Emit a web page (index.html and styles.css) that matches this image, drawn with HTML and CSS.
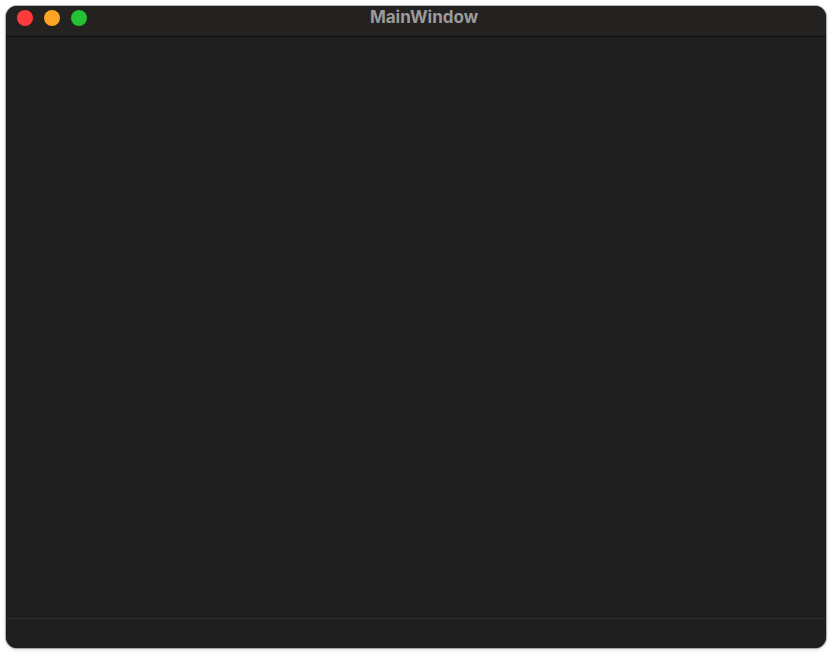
FILE: index.html
```html
<!DOCTYPE html>
<html>
<head>
<meta charset="utf-8">
<link rel="stylesheet" href="styles.css">
</head>
<body>
<div class="window">
  <div class="titlebar">
    <div class="lights">
      <span class="light red"></span>
      <span class="light yellow"></span>
      <span class="light green"></span>
    </div>
    <div class="title">MainWindow</div>
  </div>
  <div class="content"></div>
  <div class="statusbar"></div>
</div>
</body>
</html>
```
FILE: styles.css
```css
html, body {
  margin: 0;
  padding: 0;
  background: #ffffff;
  width: 832px;
  height: 654px;
  overflow: hidden;
}
body {
  padding: 6px;
  box-sizing: border-box;
  font-family: "Inter", "Liberation Sans", sans-serif;
}
.window {
  width: 820px;
  height: 642px;
  border-radius: 11px;
  overflow: hidden;
  background: #1e1e1e;
  display: flex;
  flex-direction: column;
  box-shadow: 0 0 0 1px rgba(0,0,0,0.25), 0 1px 4px rgba(0,0,0,0.2);
}
.titlebar {
  height: 30px;
  background: #232221;
  border-bottom: 1px solid #0c0c0c;
  position: relative;
  display: flex;
  align-items: center;
  justify-content: center;
  flex-shrink: 0;
}
.lights {
  position: absolute;
  left: 11px;
  top: 4px;
  display: flex;
  gap: 11px;
}
.light {
  width: 16px;
  height: 16px;
  border-radius: 50%;
  display: block;
}
.red { background: #fe3b3a; }
.yellow { background: #fea324; }
.green { background: #23c133; }
.title {
  color: #9b9a99;
  font-size: 17px;
  font-weight: 700;
  margin-top: -8px;
  margin-left: 16px;
}
.content {
  flex: 1;
  background: #1e1e1e;
}
.statusbar {
  height: 29px;
  border-top: 1px solid #2f2f2f;
  background: #1e1e1e;
  flex-shrink: 0;
}
```
